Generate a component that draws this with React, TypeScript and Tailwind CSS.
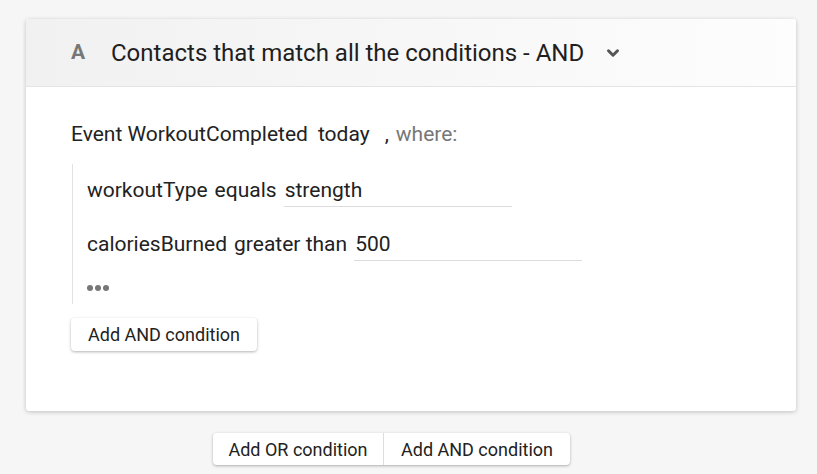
import { ChevronDown } from "lucide-react"

function Field({ value, width }: { value: string; width: string }) {
  return (
    <span className={`inline-flex h-[31px] items-center border-b border-[#dcdcdc] pl-px ${width}`}>{value}</span>
  )
}

function Row({ children }: { children: React.ReactNode }) {
  return <div className="flex h-[54px] items-center gap-[7px] text-[21px] text-[#222]">{children}</div>
}

export default function App() {
  return (
    <div
      className="min-h-[474px] bg-[#f6f6f6] pt-[19px] pl-[26px]"
      style={{ fontFamily: "Roboto, 'Noto Sans', sans-serif" }}
    >
      <div className="w-[770px] rounded-[3px] bg-white shadow-[0_1px_4px_rgba(0,0,0,0.22)]">
        <div className="flex h-[68px] items-center rounded-t-[3px] border-b border-[#e4e4e4] bg-gradient-to-r from-[#f1f1f1] to-[#fdfdfd] pl-[45px]">
          <span className="w-[40px] text-[21px] font-bold text-[#777]">A</span>
          <span className="text-[24px] text-[#1f1f1f]">Contacts that match all the conditions - AND</span>
          <ChevronDown className="ml-[20px] h-[18px] w-[18px] text-[#555]" strokeWidth={4} />
        </div>

        <div className="pt-[37px] pb-[60px] pl-[45px]">
          <div className="flex items-center text-[21px] leading-none text-[#222]">
            <span>Event WorkoutCompleted</span>
            <span className="ml-[10px]">today</span>
            <span className="ml-[15px]">,</span>
            <span className="ml-[7px] text-[#777]">where:</span>
          </div>

          <div className="mt-[19px] ml-px border-l border-[#e2e2e2] pl-[14px]">
            <Row>
              <span>workoutType</span>
              <span>equals</span>
              <Field value="strength" width="w-[228px]" />
            </Row>
            <Row>
              <span>caloriesBurned</span>
              <span>greater than</span>
              <Field value="500" width="w-[228px]" />
            </Row>
            <div className="flex h-[32px] items-center gap-[2px]">
              <span className="h-[6px] w-[6px] rounded-full bg-[#777]" />
              <span className="h-[6px] w-[6px] rounded-full bg-[#777]" />
              <span className="h-[6px] w-[6px] rounded-full bg-[#777]" />
            </div>
          </div>

          <button className="mt-[14px] h-[33px] w-[186px] rounded-[4px] bg-white text-[18px] text-[#222] shadow-[0_1px_3px_rgba(0,0,0,0.3)]">
            Add AND condition
          </button>
        </div>
      </div>

      <div className="mt-[22px] ml-[187px] flex h-[32px] w-[357px] rounded-[4px] bg-white text-[18px] text-[#222] shadow-[0_1px_3px_rgba(0,0,0,0.3)]">
        <button className="w-[171px] border-r border-[#ddd]">Add OR condition</button>
        <button className="flex-1">Add AND condition</button>
      </div>
    </div>
  )
}
